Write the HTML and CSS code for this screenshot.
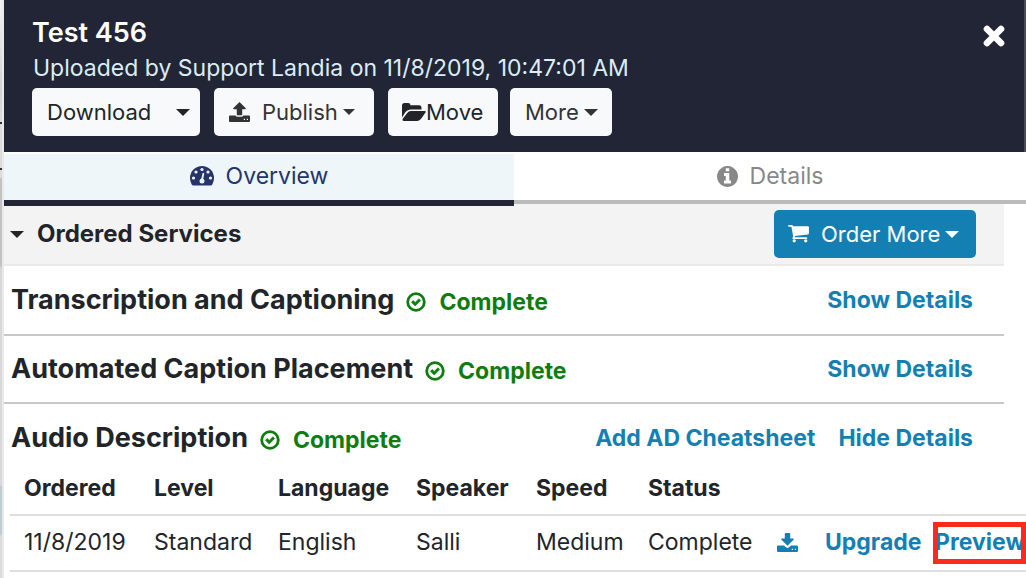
FILE: index.html
```html
<!DOCTYPE html>
<html lang="en">
<head>
<meta charset="utf-8">
<meta name="viewport" content="width=device-width, initial-scale=1">
<title>Test 456</title>
<link rel="stylesheet" href="styles.css">
</head>
<body>
<svg class="sprite" aria-hidden="true">
  <symbol id="check" viewBox="0 0 20 20"><circle cx="10" cy="10" r="8.3" fill="none" stroke="currentColor" stroke-width="2.800"/><path d="M5.400 10.200l1.800-1.800 2 2 3.700-3.700 1.800 1.800-5.500 5.600z" fill="currentColor" stroke="currentColor" stroke-width=".6" stroke-linejoin="round"/></symbol>
</svg>
<div class="backdrop"></div>
<main class="panel">
  <header class="header">
    <div class="title-row">
      <h1 class="title">Test 456</h1>
      <button class="close" type="button" aria-label="Close"><svg width="22" height="22" viewBox="0 0 22 22"><path d="M4 4L18 18M18 4L4 18" stroke="currentColor" stroke-width="6.6" stroke-linecap="round"/></svg></button>
    </div>
    <p class="meta">Uploaded by Support Landia on 11/8/2019, 10:47:01 AM</p>
    <div class="actions">
      <button class="btn btn-download" type="button">Download<span class="caret"></span></button>
      <button class="btn btn-publish" type="button"><svg width="21" height="20" viewBox="0 0 21 20" fill="currentColor"><path d="M10.500 0L16.800 6.200Q17 7.200 16 7.200H13.200V12.400Q13.200 13.300 12.300 13.300H8.700Q7.800 13.300 7.800 12.400V7.200H5Q4 7.200 4.200 6.200Z"/><path fill-rule="evenodd" d="M1 13.400H6.600Q7.200 14.700 8.600 14.700H12.400Q13.800 14.700 14.400 13.400H20Q21 13.400 21 14.400V19Q21 20 20 20H1Q0 20 0 19V14.400Q0 13.400 1 13.400ZM14.800 16.800V18H16V16.800ZM17.800 16.800V18H19V16.800Z"/></svg><span class="label">Publish</span><span class="caret caret-small"></span></button>
      <button class="btn btn-move" type="button"><svg width="24" height="18" viewBox="0 0 24 18" fill="currentColor"><path d="M0 14.500V2.500Q0 0 2.500 0H6q2.500 0 2.500 2.300H17q2.500 0 2.500 2.500v1.700H8.500Q5.500 6.500 3.500 9z"/><path d="M.8 15.800L5 10.200Q6.500 8 9 8h13.500q2 0 1 1.600l-4.200 6q-1.500 2.300-4 2.300H2q-2.200 0-1.200-2.100z"/></svg>Move</button>
      <button class="btn btn-more" type="button">More<span class="caret"></span></button>
    </div>
  </header>
  <nav class="tabs">
    <a class="tab tab-active" href="#overview"><svg width="24" height="20" viewBox="0 0 24 20"><path fill="currentColor" d="M12 0a12 12 0 0 1 12 12q0 3.600-1.700 6.500-.7 1-1.500 1H3.200q-.8 0-1.500-1Q0 15.600 0 12A12 12 0 0 1 12 0z"/><g fill="#eff6fa"><circle cx="3.500" cy="12" r="1.600"/><circle cx="6" cy="6" r="1.600"/><circle cx="12" cy="3.500" r="1.600"/><circle cx="18" cy="6" r="1.600"/><circle cx="20.500" cy="12" r="1.600"/><path d="M13.200 6.800q1.300.2 1 1.300L13.200 12.700q1.300.8 1.300 2.400a2.500 2.500 0 0 1-5 0q0-1.900 1.900-2.500L12.500 7.600q.2-.7.700-.8z"/></g></svg>Overview</a>
    <a class="tab" href="#details"><svg width="21" height="21" viewBox="0 128 1536 1536"><path fill="currentColor" d="M1024 1376v-160q0-14-9-23t-23-9h-96v-512q0-14-9-23t-23-9h-320q-14 0-23 9t-9 23v160q0 14 9 23t23 9h96v320h-96q-14 0-23 9t-9 23v160q0 14 9 23t23 9h448q14 0 23-9t9-23zm-128-896v-160q0-14-9-23t-23-9h-192q-14 0-23 9t-9 23v160q0 14 9 23t23 9h192q14 0 23-9t9-23zm640 416q0 209-103 385.500t-279.500 279.500-385.500 103-385.500-103-279.500-279.500-103-385.500 103-385.500 279.500-279.500 385.500-103 385.500 103 279.500 279.500 103 385.500z"/></svg>Details</a>
  </nav>
  <section class="services" id="overview">
    <div class="services-head">
      <h2 class="services-title"><span class="caret"></span>Ordered Services</h2>
      <button class="btn btn-order" type="button"><svg width="21" height="18" viewBox="0 0 22 19" fill="currentColor"><path d="M.8 0h3.300q.9 0 1.100 1.200H21q1 0 1 1V9q0 .8-.9 1L7.100 11.700l.2 1.300H19.300q.9 0 .9.900t-.9.900H5.400q-1.100 0-.8-1.200l.8-1.400L3.500 1.800H.8Q0 1.800 0 .9T.8 0z"/><circle cx="6.500" cy="16.700" r="1.700"/><circle cx="18.600" cy="16.700" r="1.700"/></svg><span class="label">Order More</span><span class="caret"></span></button>
    </div>
    <div class="service">
      <h3 class="service-name">Transcription and Captioning</h3>
      <span class="status"><svg width="20" height="20"><use href="#check"/></svg>Complete</span>
      <div class="links"><a class="link" href="#t">Show Details</a></div>
    </div>
    <div class="service">
      <h3 class="service-name">Automated Caption Placement</h3>
      <span class="status"><svg width="20" height="20"><use href="#check"/></svg>Complete</span>
      <div class="links"><a class="link" href="#a">Show Details</a></div>
    </div>
    <div class="service service-open">
      <h3 class="service-name">Audio Description</h3>
      <span class="status"><svg width="20" height="20"><use href="#check"/></svg>Complete</span>
      <div class="links"><a class="link" href="#c">Add AD Cheatsheet</a><a class="link" href="#h">Hide Details</a></div>
    </div>
  </section>
  <div class="table-wrap">
    <table class="orders">
      <colgroup><col class="c-date"><col class="c-level"><col class="c-lang"><col class="c-speaker"><col class="c-speed"><col class="c-status"><col class="c-icon"><col class="c-upgrade"><col></colgroup>
      <thead><tr><th>Ordered</th><th>Level</th><th>Language</th><th>Speaker</th><th>Speed</th><th>Status</th><th></th><th></th><th></th></tr></thead>
      <tbody><tr>
        <td>11/8/2019</td><td>Standard</td><td>English</td><td>Salli</td><td>Medium</td><td>Complete</td>
        <td><a class="link" href="#dl" aria-label="Download"><svg width="21" height="19" viewBox="0 0 21 19" fill="currentColor"><path d="M8.700 0H12.300Q13.200 0 13.200.9V5.600H16Q17 5.600 16.800 6.600L10.500 12.800L4.200 6.600Q4 5.600 5 5.600H7.800V.9Q7.800 0 8.700 0Z"/><path fill-rule="evenodd" d="M1 12.400H7L9 14.300Q10.500 15.500 12 14.300L14 12.400H20Q21 12.400 21 13.400V18Q21 19 20 19H1Q0 19 0 18V13.400Q0 12.400 1 12.400ZM14.800 15.800V17H16V15.800ZM17.800 15.800V17H19V15.800Z"/></svg></a></td>
        <td><a class="link" href="#up">Upgrade</a></td>
        <td class="marked"><a class="link" href="#pv">Preview</a></td>
      </tr></tbody>
    </table>
  </div>
</main>
</body>
</html>
```
FILE: styles.css
```css
* { box-sizing: border-box; }
body {
  margin: 0;
  min-height: 100vh;
  display: flex;
  overflow: hidden;
  background: #fff;
  color: #212529;
  font: 23px/32px Inter, "Liberation Sans", sans-serif;
}
svg { flex: none; }
.sprite { position: absolute; width: 0; height: 0; }
h1, h2, h3, p { margin: 0; }
a { text-decoration: none; }
button { font: inherit; cursor: pointer; }

.backdrop {
  width: 4px;
  flex: none;
  border-right: 2px solid #e9e9e9;
  background: linear-gradient(#f0f2f3 0, #d0d2d3 90px, #dcdcdc 122px, #303238 122px, #303238 124px, #dcdcdc 124px, #dcdcdc 168px, #303238 168px, #303238 170px, #dcdcdc 170px, #dcdcdc 178px, #c2c2c2 178px, #c2c2c2 266px, #d8d8d8 268px, #d8d8d8 486px, #becbd3 486px, #becbd3 534px, #dcdcdc 536px);
}
.panel { flex: 1; min-width: 0; overflow: hidden; }

.header {
  padding: 16px 18px 16px 28px;
  border-right: 2px solid #4b4c5a;
  background: #222535;
}
.title-row { display: flex; justify-content: space-between; align-items: center; height: 34px; }
.title { color: #fff; font-size: 27px; font-weight: 600; }
.close { display: flex; margin-top: 6px; padding: 0 1px; border: 0; background: none; color: #fff; }
.meta { padding: 2px 0 4px 1px; color: #dcedf5; }
.actions { display: flex; }
.btn {
  display: flex;
  align-items: center;
  height: 48px;
  padding: 0 14px;
  border: 0;
  border-radius: 5px;
  background: #f8f9fb;
  color: #333;
  font-size: 22px;
  white-space: nowrap;
}
.label { margin: 0 5px 0 12px; }
.caret { flex: none; border: 7px solid transparent; border-top-color: currentColor; border-bottom: 0; }
.caret-small { border-width: 6px 6px 0; }
.btn-download { width: 168px; padding: 0 10px 0 15px; justify-content: space-between; margin-right: 14px; color: #212529; }
.btn-publish { width: 160px; margin-right: 14px; padding: 0 15px; }
.btn-move { width: 110px; margin-right: 12px; color: #212529; }
.btn-more { width: 102px; padding: 0 14px 0 15px; justify-content: space-between; }

.tabs { display: grid; grid-template-columns: 510px 1fr; align-items: start; height: 52px; }
.tab {
  display: flex;
  align-items: center;
  justify-content: center;
  gap: 12px;
  height: 52px;
  border-bottom: 4px solid #bbb;
  color: #888;
}
.tab-active {
  position: relative;
  height: 54px;
  padding-bottom: 2px;
  border-top: 2px solid #fff;
  border-bottom: 6px solid #222535;
  background: #eff6fa;
  color: #26346b;
}

.services { margin-right: 22px; }
.services-head {
  display: flex;
  align-items: center;
  justify-content: space-between;
  height: 62px;
  padding: 0 28px 0 6px;
  border-bottom: 2px solid #e9e9e9;
  background: #f3f3f3;
}
.services-title { display: flex; align-items: center; gap: 13px; font-size: 24px; font-weight: 700; }
.btn-order { width: 202px; background: #147fb3; color: #fff; }
.service {
  display: flex;
  align-items: center;
  height: 70px;
  padding: 0 31px 0 7px;
  border-bottom: 2px solid #c8c8c8;
}
.service + .service { height: 68px; }
.service-open { border-bottom: 0; }
.service-name { font-size: 27px; font-weight: 700; }
.status { display: flex; align-items: center; gap: 13px; margin-left: 12px; padding-top: 3px; color: #0f7c10; font-weight: 700; }
.links { display: flex; gap: 23px; margin-left: auto; }
.link { color: #147fb3; font-weight: 700; }

.table-wrap { padding: 0 0 0 6px; }
.orders { width: 100%; table-layout: fixed; border-collapse: separate; border-spacing: 0; }
.orders th, .orders td {
  height: 56px;
  padding: 0 0 2px 14px;
  border-bottom: 2px solid #dedede;
  text-align: left;
  white-space: nowrap;
}
.orders th { height: 44px; padding-top: 0; padding-bottom: 10px; font-weight: 700; }
.orders td svg { display: block; }
.c-date { width: 130px; }
.c-level { width: 124px; }
.c-lang { width: 138px; }
.c-speaker { width: 120px; }
.c-speed { width: 112px; }
.c-status { width: 129px; }
.c-icon { width: 48px; }
.c-upgrade { width: 110px; }
.orders .marked { position: relative; }
.marked::after { content: ""; position: absolute; inset: 6px 0 6px 12px; border: 5px solid #fc2a1c; }
```
